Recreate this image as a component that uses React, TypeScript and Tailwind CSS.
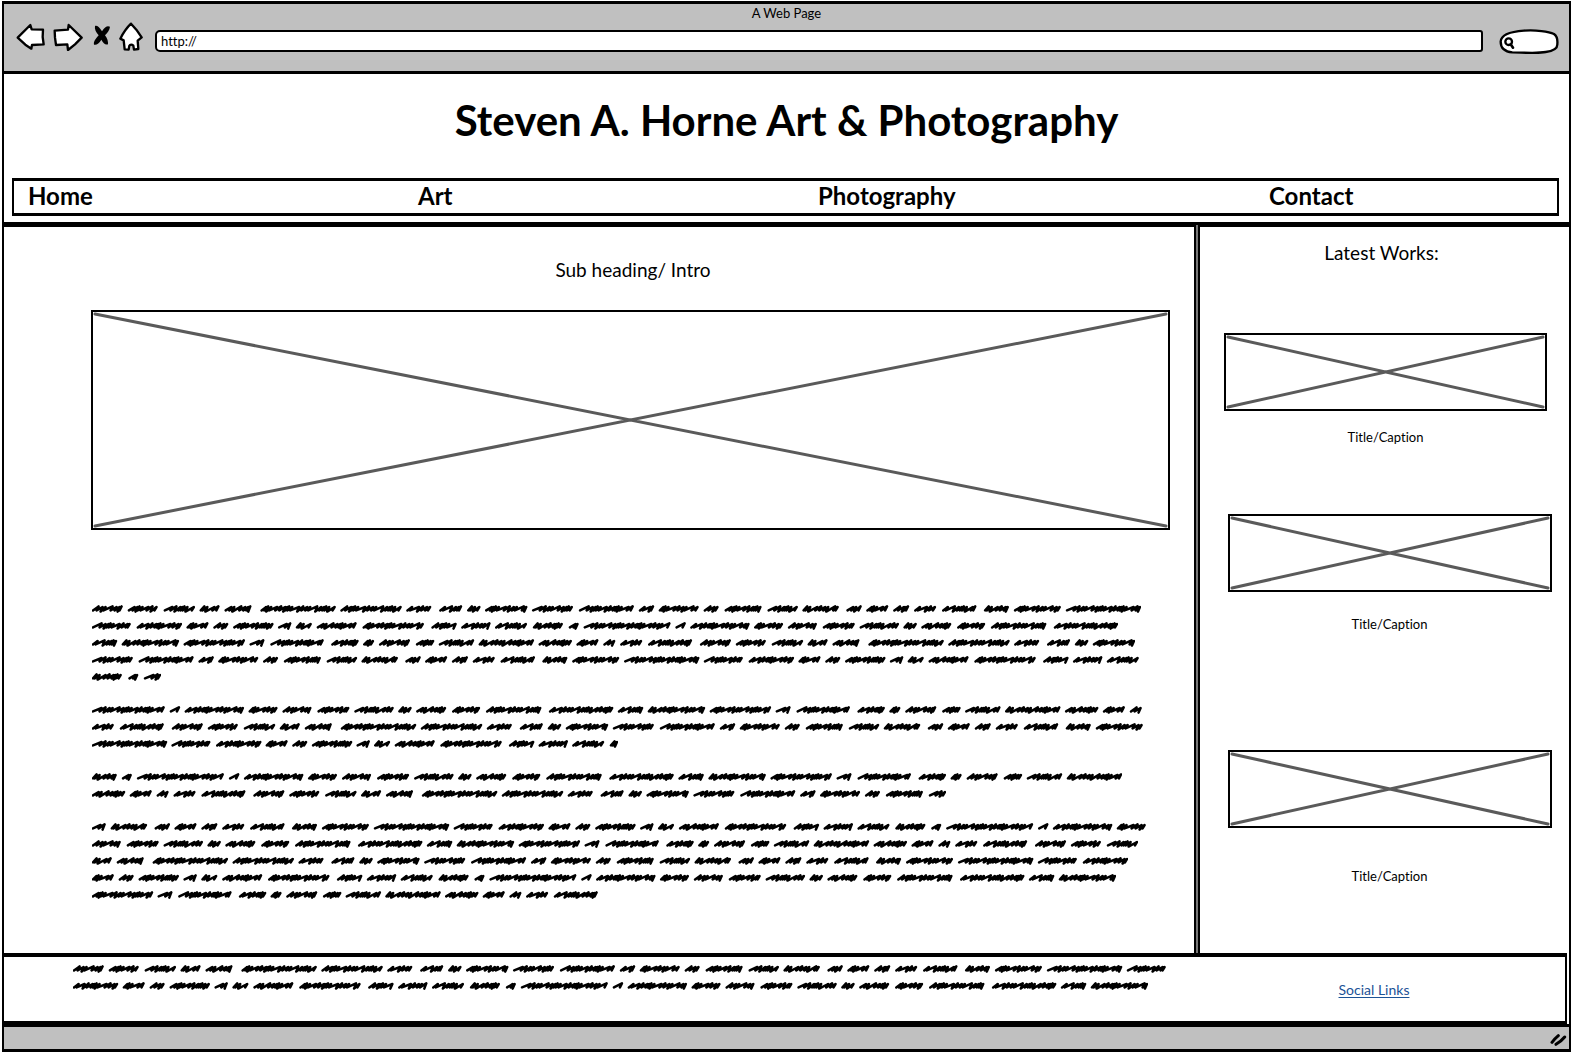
import React from "react";

const FONT = 'font-["Lato","Open_Sans",sans-serif] [font-variant-ligatures:none]';

/* Widths of the scribbled words, grouped by sentence. The sequence repeats. */
const SENTENCES: number[][] = [
  [31, 31, 31, 20, 28],
  [75, 61, 25],
  [23, 13, 42, 42, 55, 15, 40, 16, 38, 30, 36],
  [15, 22, 16, 23, 34],
  [25, 47, 75, 40, 45, 22, 15, 40, 13, 16, 41, 61],
  [25, 29, 33, 31, 10, 87, 10, 59, 29, 30, 32, 39, 13, 31, 29, 55],
  [64, 25, 57, 61, 16, 53],
  [27, 11, 32, 18, 35, 55, 33, 22, 12, 23, 44],
];

const WORDS = SENTENCES.flatMap((s) =>
  s.map((width, i) => ({ width, last: i === s.length - 1 })),
);

type Line = {
  from: number;
  count: number;
  width: number;
  head?: number;
  tail?: number;
};

const PARAGRAPHS: Line[][] = [
  [
    { from: 0, count: 27, width: 1049 },
    { from: 27, count: 26, width: 1026 },
    { from: 53, count: 27, width: 1043 },
    { from: 11, count: 28, width: 1048 },
    { from: 39, count: 3, width: 69, tail: 17 },
  ],
  [
    { from: 41, count: 26, width: 1050, head: 73 },
    { from: 67, count: 28, width: 1051 },
    { from: 26, count: 14, width: 526, tail: 8 },
  ],
  [
    { from: 39, count: 25, width: 1030, head: 25 },
    { from: 64, count: 23, width: 854, tail: 17 },
  ],
  [
    { from: 17, count: 28, width: 1054, head: 14 },
    { from: 45, count: 27, width: 1046 },
    { from: 3, count: 26, width: 1036 },
    { from: 29, count: 26, width: 1024 },
    { from: 55, count: 14, width: 506 },
  ],
];

const FOOTER_LINES: Line[] = [
  { from: 0, count: 28, width: 1094 },
  { from: 28, count: 27, width: 1075 },
];

function wordPath(x: number, width: number, seed: number) {
  const steps = [4, 4, 3, 7, 4, 3, 2, 3, 6, 4, 4, 2, 2, 3, 7];
  const end = x + width - 2;
  let cx = x + 1;
  let i = seed * 4;
  let d = `M${cx} 10.4`;
  while (cx < end - 2) {
    const step = Math.min(steps[i % steps.length], end - cx);
    const top = i % 3 === 0 ? 6.4 : 7;
    const bottom = i % 4 === 1 ? 11.6 : 10.4;
    const peak = Math.min(cx + step + 1.6, end + 1);
    d += `L${peak} ${top}L${peak - 2} ${bottom}`;
    cx += step;
    i += 1;
  }
  return d;
}

function ScribbleLine({ line }: { line: Line }) {
  const words = Array.from({ length: line.count }, (_, i) => {
    const word = WORDS[(line.from + i) % WORDS.length];
    let width = word.width;
    if (i === 0 && line.head) width = line.head;
    if (i === line.count - 1 && line.tail) width = line.tail;
    return { width, last: word.last, seed: (line.from + i) % WORDS.length };
  });
  const inner = words.slice(0, -1);
  const breaks = inner.filter((w) => w.last).length;
  const total = words.reduce((sum, w) => sum + w.width, 0);
  const gap = (line.width - total - breaks * 3) / Math.max(inner.length, 1);
  let x = 0;
  const d = words
    .map((w) => {
      const p = wordPath(x, w.width, w.seed);
      x += w.width + gap + (w.last ? 3 : 0);
      return p;
    })
    .join("");
  return (
    <svg
      aria-hidden="true"
      width={line.width}
      height="17"
      viewBox={`0 0 ${line.width} 17`}
      className="block h-[17px] max-w-none"
      fill="none"
      stroke="#000"
      strokeWidth="2.5"
      strokeLinecap="round"
      strokeLinejoin="round"
    >
      <path d={d} />
    </svg>
  );
}

function ImagePlaceholder({ className, label }: { className: string; label: string }) {
  return (
    <div role="img" aria-label={label} className={`border-2 border-black p-0.5 ${className}`}>
      <svg className="block h-full w-full overflow-visible" preserveAspectRatio="none" viewBox="0 0 100 100">
        <path
          d="M0 0L100 100M0 100L100 0"
          stroke="#5a5a5a"
          strokeWidth="3"
          strokeLinecap="round"
          vectorEffect="non-scaling-stroke"
        />
      </svg>
    </div>
  );
}

function Toolbar() {
  const stroke = {
    fill: "#fff",
    stroke: "#000",
    strokeWidth: 7,
    strokeLinejoin: "round" as const,
    strokeLinecap: "round" as const,
  };
  return (
    <div className="flex items-start pl-3 pr-2.5">
      <button aria-label="Back" className="mt-px">
        <svg width="29" height="28" viewBox="48 68 87 84">
          <path {...stroke} d="M53 112L91 74L95 87L129 88L128 110L131 132L96 134L94 145L76 133Z" />
        </svg>
      </button>
      <button aria-label="Forward" className="ml-2 mt-px">
        <svg width="30" height="28" viewBox="159 68 90 84">
          <path {...stroke} d="M164 91L204 88L206 74L245 112L225 132L204 149L202 132L168 134L165 112Z" />
        </svg>
      </button>
      <button aria-label="Stop" className="ml-2.5 mt-[3px]">
        <svg width="18" height="21" viewBox="282 76 54 63">
          <path
            d="M288 79C294 77 300 81 309 95C318 80 326 77 333 81C332 91 325 100 318 107C325 116 328 126 327 134C319 137 313 131 307 120C300 131 293 137 285 135C283 126 290 117 299 107C291 98 286 88 288 79Z"
            fill="#000"
          />
        </svg>
      </button>
      <button aria-label="Home page" className="ml-2">
        <svg width="24" height="30" viewBox="357 66 72 90">
          <path {...stroke} d="M393 71L409 89L425 112L413 122L415 147L402 149L400 137C396 133 390 133 388 137L386 149L374 148L371 121L361 116Q375 88 393 71Z" />
        </svg>
      </button>
      <input
        type="text"
        aria-label="Address"
        defaultValue="http://"
        className="ml-3 mt-2 block h-[22px] min-w-0 flex-1 rounded-l-[5px] rounded-r-[3px] border-2 border-black bg-white px-1 pb-px text-[13px] leading-4 outline-none"
      />
      <div className="relative ml-4 mt-[7px] h-[25px] w-[60px]">
        <svg className="block" width="60" height="25" viewBox="0 0 180 75">
          <path {...stroke} d="M5 38C6 18 32 8 75 5C110 2 150 8 165 15C175 22 176 34 175 45C176 60 160 66 140 69C115 74 80 71 40 70C18 68 5 58 5 38Z" />
          <circle cx="29" cy="38" r="10" fill="none" stroke="#000" strokeWidth="7" />
          <path d="M35 46L42 56" stroke="#000" strokeWidth="8" strokeLinecap="round" />
        </svg>
        <input
          type="text"
          aria-label="Search"
          className="absolute inset-y-1 left-4 w-9 bg-transparent text-[11px] leading-4 outline-none"
        />
      </div>
    </div>
  );
}

const WORKS = [
  { box: "mt-16 ml-6 mr-[22px]", caption: "mt-4 pl-2.5 pr-2" },
  { box: "mt-[67px] ml-7 mr-[17px]", caption: "mt-[22px] pl-3.5 pr-1" },
  { box: "mt-[116px] ml-7 mr-[17px]", caption: "mt-[38px] pl-3.5 pr-1" },
];

export default function App() {
  return (
    <div className={`flex min-h-screen flex-col bg-white py-px pl-0.5 pr-px text-black ${FONT}`}>
      <div className="flex flex-1 flex-col border-x-2 border-y-[3px] border-black">
        <div className="h-[70px] border-b-[3px] border-black bg-[#c0c0c0]">
          <p className="h-[18px] text-center text-[13px] leading-[18px]">A Web Page</p>
          <Toolbar />
        </div>

        <header className="border-b-[3px] border-black pb-1.5">
          <h1 className="pb-[34px] pt-[22px] text-center text-[42px] font-bold leading-[48px]">
            Steven A. Horne Art &amp; Photography
          </h1>
          <nav className="ml-2 mr-2.5 flex h-[38px] items-start border-x-2 border-y-[3px] border-black pl-3.5 text-[24px] font-bold leading-[30px]">
            <a href="#home" className="w-[390px]">Home</a>
            <a href="#art" className="w-[400px]">Art</a>
            <a href="#photography" className="w-[451px]">Photography</a>
            <a href="#contact">Contact</a>
          </nav>
        </header>

        <div className="flex flex-1">
          <main className="min-w-0 flex-1 border-t-2 border-black">
            <p className="pl-[68px] pt-[27px] text-center text-[19px] leading-8">Sub heading/ Intro</p>
            <ImagePlaceholder label="Intro picture" className="ml-[87px] mr-6 mt-6 h-[220px]" />
            <div className="ml-[88px] mt-[70px] flex flex-col gap-4">
              {PARAGRAPHS.map((lines, i) => (
                <div key={i}>
                  {lines.map((line, j) => (
                    <ScribbleLine key={j} line={line} />
                  ))}
                </div>
              ))}
            </div>
          </main>
          <div className="w-1.5 border-x-2 border-black bg-[#777]" />
          <aside className="w-[369px] border-t-2 border-black">
            <h2 className="pr-1.5 pt-2.5 text-center text-[19px] leading-8">Latest Works:</h2>
            {WORKS.map((work, i) => (
              <figure key={i}>
                <ImagePlaceholder label={`Latest work ${i + 1}`} className={`h-[78px] ${work.box}`} />
                <figcaption className={`text-center text-[13px] leading-5 ${work.caption}`}>
                  Title/Caption
                </figcaption>
              </figure>
            ))}
          </aside>
        </div>

        <footer className="mr-0.5 flex h-[71px] border-b-[3px] border-r-2 border-t-4 border-black">
          <div className="ml-[69px] mt-[3px] min-w-0 flex-1">
            {FOOTER_LINES.map((line, i) => (
              <ScribbleLine key={i} line={line} />
            ))}
          </div>
          <div className="w-[382px] pt-5 text-center">
            <a href="#social" className="text-[14px] leading-5 text-[#1b5296] underline underline-offset-2">
              Social Links
            </a>
          </div>
        </footer>
        <div className="flex h-[25px] justify-end border-t-[3px] border-black bg-[#c0c0c0] pr-0.5 pt-1.5">
          <svg width="17" height="14" viewBox="0 0 51 42" fill="none" stroke="#000" strokeWidth="9" strokeLinecap="round">
            <path d="M6 28C12 20 18 14 25 8M18 34C26 29 36 22 44 12" />
          </svg>
        </div>
      </div>
    </div>
  );
}
